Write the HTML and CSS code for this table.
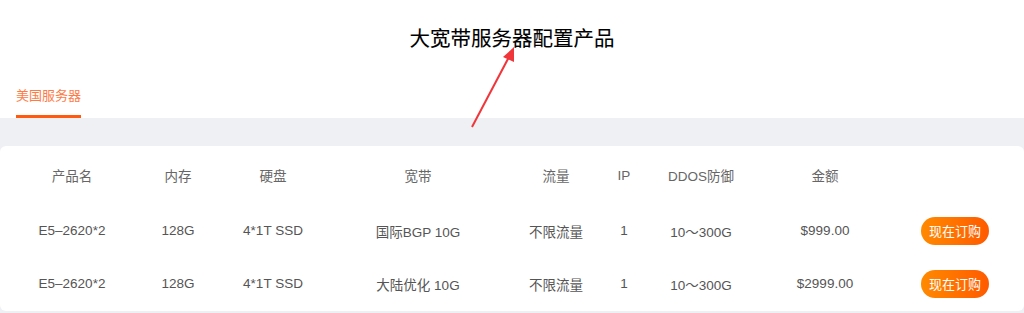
FILE: index.html
```html
<!DOCTYPE html>
<html lang="zh-CN">
<head>
<meta charset="utf-8">
<title>大宽带服务器配置产品</title>
<link rel="stylesheet" href="styles.css">
</head>
<body>
<div class="page">
  <header class="top">
    <h1 class="title">大宽带服务器配置产品</h1>
    <nav class="tabs">
      <span class="tab active">美国服务器</span>
    </nav>
  </header>
  <section class="band">
    <div class="card">
      <div class="row head">
        <div>产品名</div><div>内存</div><div>硬盘</div><div>宽带</div><div>流量</div><div>IP</div><div>DDOS防御</div><div>金额</div><div></div>
      </div>
      <div class="row">
        <div>E5–2620*2</div><div>128G</div><div>4*1T SSD</div><div>国际BGP 10G</div><div>不限流量</div><div>1</div><div>10～300G</div><div>$999.00</div><div><button class="buy">现在订购</button></div>
      </div>
      <div class="row">
        <div>E5–2620*2</div><div>128G</div><div>4*1T SSD</div><div>大陆优化 10G</div><div>不限流量</div><div>1</div><div>10～300G</div><div>$2999.00</div><div><button class="buy">现在订购</button></div>
      </div>
    </div>
  </section>
  <svg class="arrow" width="1024" height="140" viewBox="0 0 1024 140">
    <line x1="472" y1="127" x2="510" y2="55" stroke="#f0363a" stroke-width="2"/>
    <polygon points="514,47 503,57 514,62" fill="#f0363a"/>
  </svg>
</div>
</body>
</html>
```
FILE: styles.css
```css
* { box-sizing: border-box; }
html, body { margin: 0; padding: 0; background: #ffffff; }
body {
  font-family: "Liberation Sans", Arial, "Noto Sans CJK SC", sans-serif;
  color: #444;
  width: 1024px;
  height: 313px;
  overflow: hidden;
}
.page { position: relative; }
.top { background: #fff; }
.title {
  margin: 0;
  padding-top: 25px;
  height: 73px;
  font-size: 20.5px;
  line-height: 24px;
  font-weight: 400;
  color: #000;
  text-align: center;
  font-family: "Noto Sans CJK SC", sans-serif;
  -webkit-text-stroke: 0.1px #000;
}
.tabs {
  display: flex;
  padding-left: 16px;
  height: 45px;
}
.tab {
  font-family: "Noto Sans CJK SC", sans-serif;
  font-size: 13px;
  line-height: 20px;
  padding-top: 12px;
  color: #ff7a45;
  border-bottom: 3px solid #ff5a10;
  height: 45px;
}
.band {
  background: #eef0f4;
  padding-top: 28px;
  height: 195px;
}
.card {
  background: #fff;
  border-radius: 6px;
  height: 165px;
}
.row {
  display: grid;
  grid-template-columns: 144px 68px 122px 168px 108px 28px 126px 122px 1fr;
  align-items: center;
  height: 53px;
  font-size: 13.5px;
  color: #555;
}
.row > div { text-align: center; white-space: nowrap; }
.row.head { height: 58px; color: #666; }
.buy {
  border: 0;
  width: 68px;
  height: 28px;
  border-radius: 14px;
  background: linear-gradient(90deg, #ff8a00, #ff5a00);
  color: #fff;
  font-size: 13px;
  font-family: "Noto Sans CJK SC", sans-serif;
  padding: 0;
  cursor: pointer;
}
.arrow {
  position: absolute;
  left: 0;
  top: 0;
  pointer-events: none;
}
```
